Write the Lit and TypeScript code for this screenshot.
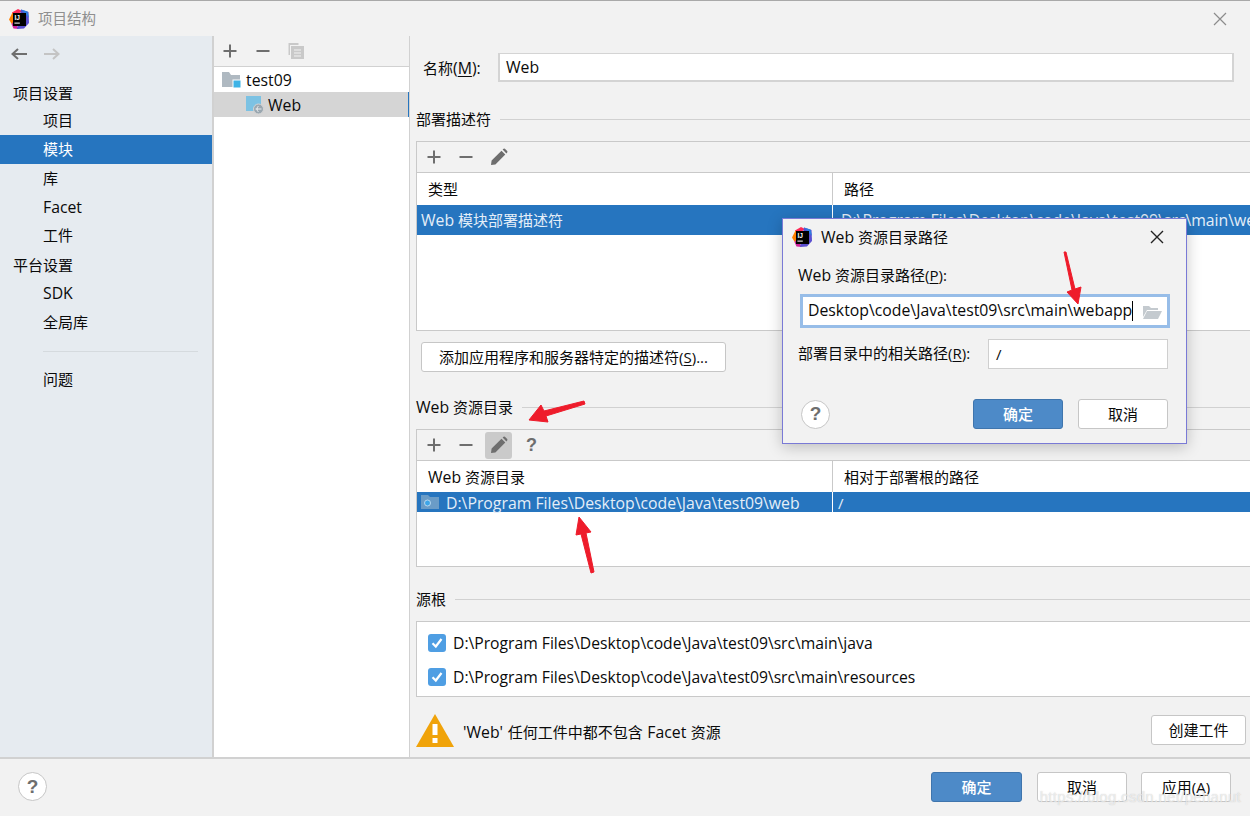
import { LitElement, html, css, svg } from "lit";
import { customElement } from "lit/decorators.js";

const l = (t: unknown) => html`<span class="l">${t}</span>`;

const logo = (s: number) => html`<svg class="logo" width=${s} height=${s} viewBox="0 0 20 20">
  <path d="M3 3.500 L9 0 L13 2 L4 9 Z" fill="#fe2857"/>
  <path d="M0 10.500 L3.500 3.500 L7 8 L3 15.500 Z" fill="#ff8100"/>
  <path d="M2.500 15 L6 11 L9.500 20 L4.500 19.500 Z" fill="#d0259d"/>
  <path d="M12 .5 L19.500 3 L20 14 L15 19.500 L8 20 Z" fill="#5a4fd0"/>
  <path d="M12 .5 L18.500 2.500 L20 9 Z" fill="#2d7ee0"/>
  <rect x="4" y="4" width="13" height="13" fill="#000"/>
  <text x="5.400" y="10.600" font-size="6.600" font-weight="700" fill="#fff" font-family="Liberation Sans, sans-serif">IJ</text>
  <rect x="5.400" y="13.600" width="5.400" height="1" fill="#fff"/>
</svg>`;

const plus = html`<svg width="16" height="16" viewBox="0 0 16 16"><path d="M8 1.500v13M1.500 8h13" stroke="#6e6e6e" stroke-width="2" fill="none"/></svg>`;
const minus = html`<svg width="16" height="16" viewBox="0 0 16 16"><path d="M1.500 8h13" stroke="#6e6e6e" stroke-width="2" fill="none"/></svg>`;
const pencil = html`<svg width="18" height="18" viewBox="0 0 18 18"><path d="M1 17 L1.600 12.600 L11.500 2.700 L15.300 6.500 L5.400 16.400 Z M12.600 1.600 L13.600 .7 Q14.200 .2 14.900 .8 L17.200 3.100 Q17.700 3.700 17.200 4.400 L16.400 5.400 Z" fill="#6e6e6e"/></svg>`;
const copy = html`<svg width="16" height="16" viewBox="0 0 16 16"><path d="M.5 0h10v2h-8.500v10h-1.500z" fill="#c9c9c9"/><rect x="3" y="3" width="13" height="13" fill="#c9c9c9"/><path d="M6 7h7M6 10h7M6 13h7" stroke="#f2f2f2" stroke-width="1"/></svg>`;
const check = html`<svg class="chk" width="18" height="18" viewBox="0 0 18 18"><rect width="18" height="18" rx="3" fill="#4f9ee3"/><path d="M4.500 9.200 L7.800 12.500 L13.500 5" stroke="#fff" stroke-width="2.200" fill="none"/></svg>`;

@customElement("app-root")
export class AppRoot extends LitElement {
  static styles = css`
    :host { display: block; width: 1250px; height: 816px; overflow: hidden; }
    * { box-sizing: border-box; }
    .win { position: relative; width: 1250px; height: 816px; background: #f2f2f2; display: flex; flex-direction: column;
      font: 15px/20px "Open Sans", "Noto Sans CJK SC", sans-serif; color: #0a0a0a; }
    .l { font-size: 15.800px; }
    .p2 { font-size: 15.700px; }
    .titlebar { height: 36px; flex: none; border-top: 1px solid #a9a9a9; display: flex; align-items: center; padding: 0 8px 0 9px; }
    .titlebar .t { margin-left: 9px; font-size: 14.500px; color: #8f8f8f; flex: 1; margin-top: 1px; }
    .main { display: flex; flex: 1; min-height: 0; }
    .side { width: 212px; flex: none; background: #e6ebf0; padding-top: 4px; }
    .nav { height: 27px; display: flex; gap: 15px; padding-left: 10px; align-items: center; margin-bottom: 12px; }
    .sh { height: 29px; padding-left: 13px; display: flex; align-items: center; }
    .sh.first { height: 27px; }
    .sh.second { margin-top: 1px; padding-bottom: 2px; }
    .it { height: 29px; padding: 0 0 2px 43px; display: flex; align-items: center; }
    .it.short { height: 28px; }
    .it.sel { background: #2675bf; color: #fff; }
    .sep { height: 1px; background: #d5dade; margin: 14px 14px 13px 43px; }
    .v1 { width: 2px; flex: none; background: #d1d1d1; }
    .mid { width: 195px; flex: none; display: flex; flex-direction: column; }
    .midbar { flex: none; height: 31px; border-bottom: 1px solid #d1d1d1; display: flex; align-items: center; padding: 0 0 1px 8px; gap: 17px; }
    .tree { flex: 1; background: #fff; }
    .node { height: 25px; display: flex; align-items: center; }
    .node.a { padding-left: 8px; gap: 5px; }
    .node.b { padding-left: 32px; gap: 4px; background: #d5d5d5; border-right: 1px solid #2675bf; }
    .v2 { width: 1px; flex: none; background: #d1d1d1; }
    .right { flex: 1; min-width: 0; padding: 0 0 0 6px; display: flex; flex-direction: column; }
    .name { display: flex; align-items: center; height: 29px; margin-top: 17px; padding-left: 7px; }
    .name label { width: 75px; flex: none; }
    .input { height: 29px; background: #fff; border: 2px solid #d4d4d4; border-width: 1px 2px 2px 2px; display: flex; align-items: center; padding-left: 6px; width: 736px; }
    .sect { display: flex; align-items: center; gap: 9px; height: 20px; }
    .sect i { flex: 1; height: 1px; background: #d1d1d1; margin-top: 1px; }
    .box { border: 1px solid #c9c9c9; border-right: none; display: flex; flex-direction: column; }
    .bar { height: 31px; display: flex; align-items: center; padding-left: 9px; gap: 16px; border-bottom: 1px solid #c9c9c9; }
    .bar .hl { width: 27px; height: 27px; background: #cacaca; border-radius: 3px; display: flex; align-items: center; justify-content: center; margin: 0 -5px; }
    .bar .q { font-size: 18px; font-weight: 700; color: #6e6e6e; font-family: "Liberation Sans", sans-serif; margin-left: 3px; }
    .body { background: #fff; flex: 1; }
    .hd { display: grid; grid-template-columns: 415px 1fr; height: 32px; align-items: center; }
    .hd > span { padding-left: 11px; height: 100%; display: flex; align-items: center; }
    .hd > span + span { border-left: 1px solid #c9c9c9; }
    .row { display: grid; grid-template-columns: 415px 1fr; background: #2675bf; color: #e4eef8; white-space: nowrap; overflow: hidden; }
    .row > span { padding-left: 4px; display: flex; align-items: center; overflow: hidden; }
    .row > span + span { border-left: 1px solid #fff; padding-left: 8px; }
    .row.thin { height: 20px; overflow: visible; }
    .row.thin > span { padding-top: 2px; height: 20px; overflow: visible; }
    .row.thin svg { margin-top: -2px; }
    .row > span.slash { padding-left: 5px; }
    .btn { display: flex; align-items: center; justify-content: center; height: 30px; background: #fff; border: 1px solid #c6c6c6; border-radius: 3px; flex: none; }
    .btn.pri { background: #4d8ac8; border-color: #3f75ad; color: #fff; font-weight: 500; }
    .roots { height: 76px; margin-top: 12px; background: #fff; border: 1px solid #c9c9c9; border-right: none; padding: 4px 0 0 11px; }
    .rt { height: 34px; display: flex; align-items: center; gap: 7px; white-space: nowrap; }
    .warn { display: flex; align-items: center; margin-top: 18px; height: 32px; }
    .warn svg { margin-top: -2px; }
    .warn .m { flex: 1; margin: 2px 0 0 9px; word-spacing: .7px; }
    .foot { height: 59px; flex: none; border-top: 2px solid #d1d1d1; display: flex; align-items: center; padding: 0 19px 2px 18px; gap: 14px; }
    .help { width: 29px; height: 29px; border-radius: 50%; background: #fff; border: 1px solid #c6c6c6; display: flex; align-items: center; justify-content: center; font: 700 19px "Liberation Sans", sans-serif; color: #6e6e6e; flex: none; }
    .dlg { position: absolute; left: 782px; top: 218px; width: 405px; height: 226px; background: #f2f2f2; border: 1px solid #7a7ad6; box-shadow: 0 3px 14px rgba(0,0,0,.22); display: flex; flex-direction: column; padding: 0 18px 0 15px; }
    .dlgt { height: 36px; flex: none; display: flex; align-items: center; margin-left: -6px; gap: 9px; }
    .dlgt > span { flex: 1; }
    .dlab { margin-top: 10px; height: 20px; }
    .fld { position: relative; margin-top: 9px; margin-left: 2px; width: 370px; height: 34px; background: #fff; border: 3px solid #97bde8; display: flex; align-items: center; padding: 0 0 2px 5px; white-space: nowrap; }
    .caret { width: 1px; height: 20px; background: #000; margin: 2px 0 0; }
    .fld svg { position: absolute; right: 5px; top: 7px; }
    .dl2 { display: flex; align-items: center; margin-top: 11px; height: 30px; }
    .dl2 label { width: 190px; flex: none; margin-top: -3px; }
    .in2 { width: 180px; height: 30px; background: #fff; border: 1px solid #cfcfcf; display: flex; align-items: center; padding-left: 7px; }
    .dfoot { display: flex; align-items: center; margin-top: 30px; gap: 15px; padding-left: 3px; }
    .wm { position: absolute; right: 9px; top: 787px; color: rgba(255,255,255,.62); font: 15px/20px "Liberation Sans", sans-serif; text-shadow: 0 0 1px rgba(150,150,150,.55); letter-spacing: .3px; }
    .over { position: absolute; inset: 0; pointer-events: none; }
    u { text-underline-offset: 2px; }
  `;

  render() {
    return html`<div class="win">
      <div class="titlebar">${logo(20)}<span class="t">项目结构</span>
        <svg width="14" height="14" viewBox="0 0 14 14" style="margin-right:15px"><path d="M1 1l12 12M13 1L1 13" stroke="#8c8c8c" stroke-width="1.200"/></svg>
      </div>
      <div class="main">
        <div class="side">
          <div class="nav">
            <svg width="18" height="14" viewBox="0 0 18 14"><path d="M17 7H3M8 2L2.500 7L8 12" stroke="#6e6e6e" stroke-width="2" fill="none"/></svg>
            <svg width="18" height="14" viewBox="0 0 18 14"><path d="M1 7H15M10 2L15.500 7L10 12" stroke="#c4c4c4" stroke-width="2" fill="none"/></svg>
          </div>
          <div class="sh first">项目设置</div>
          <div class="it">项目</div>
          <div class="it sel">模块</div>
          <div class="it">库</div>
          <div class="it">${l("Facet")}</div>
          <div class="it short">工件</div>
          <div class="sh second">平台设置</div>
          <div class="it short">${l("SDK")}</div>
          <div class="it">全局库</div>
          <div class="sep"></div>
          <div class="it">问题</div>
        </div>
        <div class="v1"></div>
        <div class="mid">
          <div class="midbar">${plus}${minus}${copy}</div>
          <div class="tree">
            <div class="node a">
              <svg width="19" height="18" viewBox="0 0 19 18"><path d="M0 1h7l2 3h9v12H0z" fill="#afb9c1"/><rect x="11" y="9" width="8" height="8" fill="#3db3e6" stroke="#fff"/></svg>
              ${l("test09")}
            </div>
            <div class="node b">
              <svg width="18" height="18" viewBox="0 0 18 18"><rect y="0" width="15" height="15" fill="#7cc2e3"/><circle cx="12.500" cy="13" r="5" fill="#9aa7b0" stroke="#d5d5d5"/><path d="M9.500 13h6M12.500 10c-2 2-2 4 0 6" stroke="#fff" fill="none" stroke-width=".8"/></svg>
              ${l("Web")}
            </div>
          </div>
        </div>
        <div class="v2"></div>
        <div class="right">
          <div class="name"><label>名称${l("(")}<u class="l">M</u>${l("):")}</label><div class="input">${l("Web")}</div></div>
          <div class="sect" style="margin-top:27px"><span>部署描述符</span><i></i></div>
          <div class="box" style="margin-top:12px;height:190px">
            <div class="bar">${plus}${minus}${pencil}</div>
            <div class="body">
              <div class="hd"><span>类型</span><span>路径</span></div>
              <div class="row" style="height:30px"><span><span>${l("Web")} 模块部署描述符</span></span><span>${l("D:\\Program Files\\Desktop\\code\\Java\\test09\\src\\main\\webapp\\WEB-INF\\web.xml")}</span></div>
            </div>
          </div>
          <div class="btn" style="margin:11px 0 0 5px;width:305px"><span>添加应用程序和服务器特定的描述符(<u>S</u>)...</span></div>
          <div class="sect" style="margin-top:25px"><span>${l("Web")} 资源目录</span><i></i></div>
          <div class="box" style="margin-top:12px;height:138px">
            <div class="bar">${plus}${minus}<span class="hl">${pencil}</span><span class="q">?</span></div>
            <div class="body">
              <div class="hd" style="height:31px"><span><span>${l("Web")} 资源目录</span></span><span>相对于部署根的路径</span></div>
              <div class="row thin"><span style="gap:7px"><svg width="18" height="14" viewBox="0 0 18 14"><path d="M0 0h7l2 2h9v12H0z" fill="#6a9cc7"/><circle cx="6.500" cy="8" r="3" fill="#3da5e8" stroke="#cfe4f5" stroke-width=".8"/></svg>${l("D:\\Program Files\\Desktop\\code\\Java\\test09\\web")}</span><span class="slash">/</span></div>
            </div>
          </div>
          <div class="sect" style="margin-top:22px"><span>源根</span><i></i></div>
          <div class="roots">
            <div class="rt">${check}<span class="p2">D:\\Program Files\\Desktop\\code\\Java\\test09\\src\\main\\java</span></div>
            <div class="rt">${check}<span class="p2">D:\\Program Files\\Desktop\\code\\Java\\test09\\src\\main\\resources</span></div>
          </div>
          <div class="warn">
            <svg width="38" height="33" viewBox="0 0 38 33"><path d="M19 0L38 33H0z" fill="#f0a30a"/><rect x="16.500" y="10" width="5" height="11" fill="#fff"/><rect x="16.500" y="24" width="5" height="5" fill="#fff"/></svg>
            <span class="m">${l("'Web'")} 任何工件中都不包含 ${l("Facet")} 资源</span>
            <div class="btn" style="width:95px;margin:-2px 4px 0 0">创建工件</div>
          </div>
        </div>
      </div>
      <div class="foot">
        <div class="help">?</div>
        <div style="flex:1"></div>
        <div class="btn pri" style="width:91px;margin-right:1px">确定</div>
        <div class="btn" style="width:90px">取消</div>
        <div class="btn" style="width:90px"><span>应用(<u>A</u>)</span></div>
      </div>
      <div class="wm">https://blog.csdn.net/pehanut</div>

      <div class="dlg">
        <div class="dlgt">${logo(20)}<span>${l("Web")} 资源目录路径</span>
          <svg width="14" height="14" viewBox="0 0 14 14" style="margin-right:4px"><path d="M1 1l12 12M13 1L1 13" stroke="#222" stroke-width="1.400"/></svg>
        </div>
        <div class="dlab">${l("Web")} 资源目录路径(<u>P</u>):</div>
        <div class="fld">${l("Desktop\\code\\Java\\test09\\src\\main\\webapp")}<span class="caret"></span>
          <svg width="20" height="16" viewBox="0 0 20 16"><path d="M1 2h6l2 2h7v2H5L1 13z" fill="#c4cacf"/><path d="M5 7h15l-4 8H1z" fill="#c4cacf"/></svg>
        </div>
        <div class="dl2"><label>部署目录中的相关路径(<u>R</u>):</label><div class="in2">/</div></div>
        <div class="dfoot">
          <div class="help" style="margin-right:128px">?</div>
          <div class="btn pri" style="width:90px">确定</div>
          <div class="btn" style="width:90px">取消</div>
        </div>
      </div>

      <svg class="over" width="1250" height="816" viewBox="0 0 1250 816">
        ${[
          "M1064 252 L1066 252 L1075 289 L1081 287 L1078 304 L1067 292 L1072 290 Z",
          "M584 401 L585 404 L546 416 L548 422 L529 420 L541 405 L544 411 Z",
          "M591 573 L594 572 L586 533 L591 532 L579 517 L576 535 L581 534 Z",
        ].map((d) => svg`<path d=${d} fill="#ee1c2b" stroke="#ee1c2b" stroke-width="1"/>`)}
      </svg>
    </div>`;
  }
}
